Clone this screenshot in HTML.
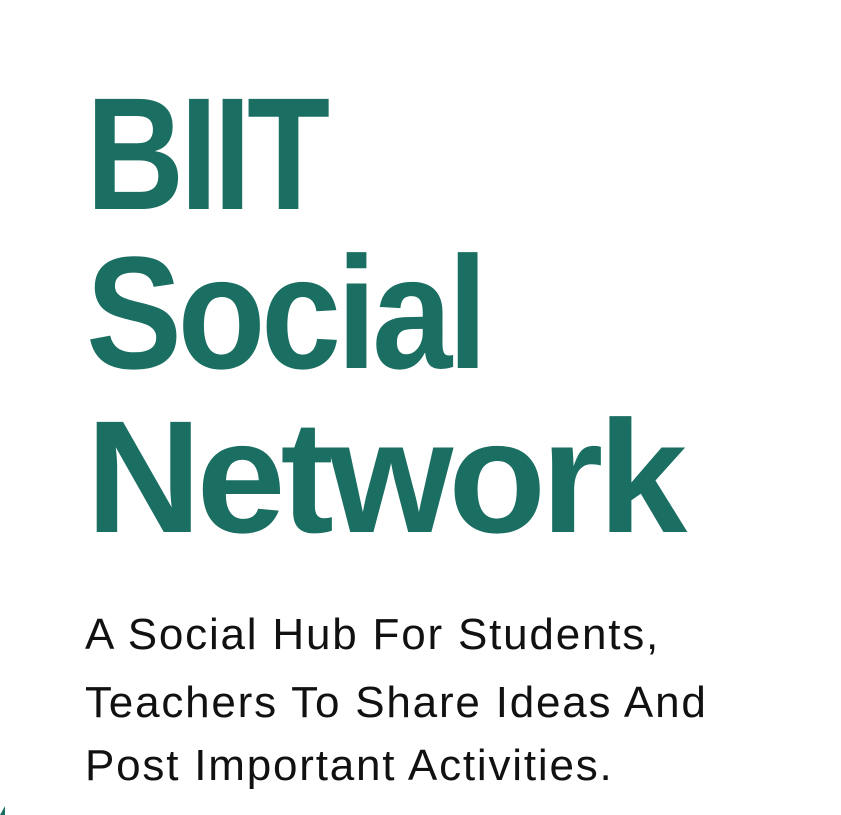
<!DOCTYPE html>
<html><head><meta charset="utf-8"><style>
html,body{margin:0;padding:0;background:#fff;width:841px;height:815px;overflow:hidden;position:relative;font-family:"Liberation Sans",sans-serif}
.t{position:absolute;left:86px;color:#1a6e62;font-weight:bold;font-size:160px;line-height:1;letter-spacing:-5px;white-space:nowrap;transform-origin:0 0}
.s{position:absolute;left:85px;color:#111;font-size:44px;line-height:1;letter-spacing:1.8px;white-space:nowrap}
</style></head><body>
<div class="t" style="top:74px;transform:scaleX(0.85)">BIIT</div>
<div class="t" style="top:233px;transform:scaleX(0.9)">Social</div>
<div class="t" style="top:397px">Network</div>
<div class="s" style="top:613px">A Social Hub For Students,</div>
<div class="s" style="top:681px">Teachers To Share Ideas And</div>
<div class="s" style="top:744px">Post Important Activities.</div>
<div style="position:absolute;left:0;top:806px;width:0;height:0;border-left:5px solid transparent;border-bottom:9px solid #1a6e62"></div>
</body></html>
